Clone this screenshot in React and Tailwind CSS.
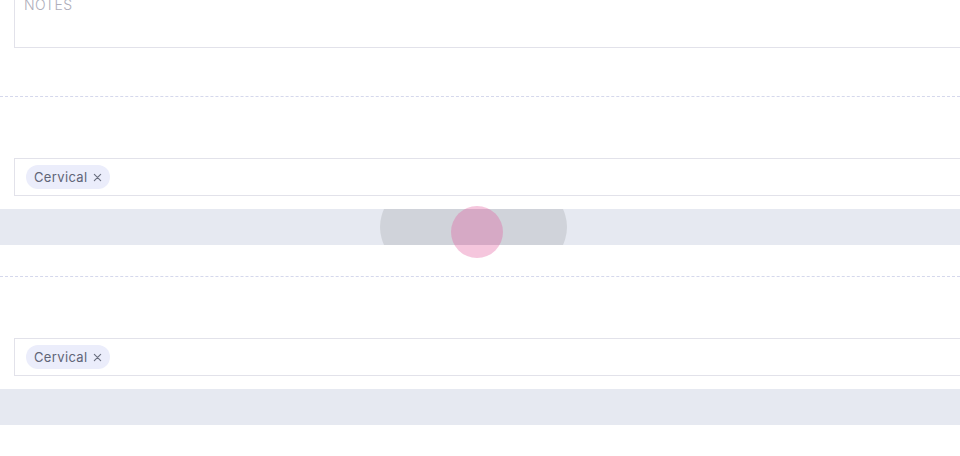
import React from "react";

function Chip() {
  return (
    <span className="inline-flex h-[24px] items-center gap-[6px] rounded-full bg-[#ebedfb] pl-[8px] pr-[8px] pt-[1px] text-[13px] tracking-[0.35px] text-[#5f6477]">
      <span>Cervical</span>
      <svg width="9" height="9" viewBox="0 0 10 10" fill="none" stroke="#6b7080" strokeWidth="1.3" strokeLinecap="round">
        <path d="M1.5 1.5l7 7M8.5 1.5l-7 7" />
      </svg>
    </span>
  );
}

function Section({ ripple }) {
  return (
    <div>
      <div className="mt-[48px] border-t border-dashed border-[#d5d8ec]" />
      <div className="ml-[14px] mt-[61px] flex h-[38px] w-[980px] items-center border border-[#e2e2ea] pl-[11px]">
        <Chip />
      </div>
      <div className="relative mt-[13px] h-[36px] overflow-hidden bg-[#e6e9f1]">
        {ripple && (
          <div className="absolute left-[380px] top-[-44px] h-[124px] w-[187px] rounded-[50%] bg-[#d0d3da]" />
        )}
      </div>
    </div>
  );
}

export default function App() {
  return (
    <div
      className="relative h-[456px] w-[960px] overflow-hidden bg-white"
      style={{ fontFamily: "Inter, 'Noto Sans', sans-serif" }}
    >
      <div className="ml-[14px] mt-[-22px] h-[70px] w-[980px] border border-[#e2e2ea] pl-[9px] pt-[16px] text-[14px] font-light leading-[20px] tracking-[0.3px] text-[#aeaeba]">
        NOTES
      </div>
      <Section ripple />
      <div className="-mt-[17px]">
        <Section />
      </div>
      <div className="pointer-events-none absolute left-[451px] top-[206px] h-[52px] w-[52px] rounded-full bg-[rgba(226,92,158,0.35)]" />
    </div>
  );
}
